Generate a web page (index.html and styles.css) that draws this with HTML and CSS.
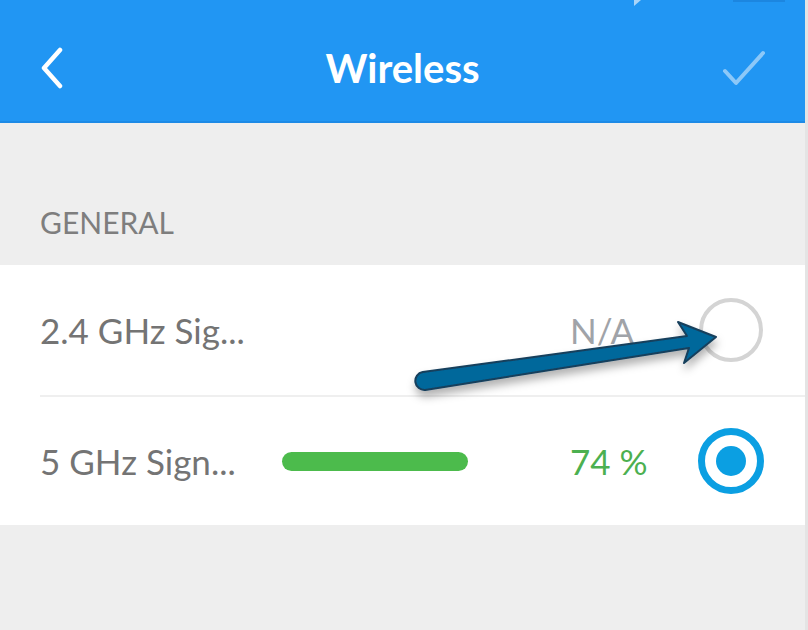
FILE: index.html
```html
<!DOCTYPE html>
<html>
<head>
<meta charset="utf-8">
<link rel="stylesheet" href="styles.css">
</head>
<body>
<div class="app">
  <header class="topbar">
    <button class="icon-btn back" aria-label="Back">
      <svg width="26" height="42" viewBox="0 0 26 42"><path d="M22 3 L6 21 L22 39" fill="none" stroke="#fff" stroke-width="4.5" stroke-linecap="round" stroke-linejoin="round"/></svg>
    </button>
    <h1 class="title">Wireless</h1>
    <button class="icon-btn check" aria-label="Save">
      <svg width="44" height="36" viewBox="0 0 44 36"><path d="M3 21 L14 33 L41 3" fill="none" stroke="#8cc8f8" stroke-width="4" stroke-linecap="round" stroke-linejoin="round"/></svg>
    </button>
  </header>

  <div class="section-head">GENERAL</div>

  <ul class="list">
    <li class="row">
      <span class="label">2.4 GHz Sig...</span>
      <span class="bar-slot"></span>
      <span class="value na">N/A</span>
      <span class="radio"></span>
    </li>
    <li class="row">
      <span class="label">5 GHz Sign...</span>
      <span class="bar-slot"><span class="bar"></span></span>
      <span class="value ok">74 %</span>
      <span class="radio on"><span class="dot"></span></span>
    </li>
  </ul>

  <div class="filler"></div>
</div>

<svg class="overlay" width="808" height="630" viewBox="0 0 808 630">
  <defs>
    <filter id="sh" x="-10%" y="-40%" width="120%" height="200%">
      <feDropShadow dx="1" dy="6" stdDeviation="4.5" flood-color="#000" flood-opacity="0.3"/>
    </filter>
  </defs>
  <path d="M634 0 L641 0 L634 6 Z" fill="#a9d4f8"/>
  <rect x="733" y="0" width="52" height="2" fill="#1c86e0"/>
  <path filter="url(#sh)" d="M422.7 372.1 L687 336 L678 322 L716 337 L684 363 L689 348 L425.3 389.9 A9 9 0 0 1 422.7 372.1 Z" fill="#00679b" stroke="#173f5c" stroke-width="2" stroke-linejoin="round"/>
</svg>
</body>
</html>
```

FILE: styles.css
```css
* { box-sizing: border-box; }
html, body { margin: 0; padding: 0; }
body {
  width: 808px;
  height: 630px;
  overflow: hidden;
  background: #e4e4e4;
  font-family: Lato, "Open Sans", "Liberation Sans", sans-serif;
  position: relative;
}
.app {
  width: 805px;
  height: 630px;
  display: flex;
  flex-direction: column;
  background: #eeeeee;
}
.topbar {
  height: 123px;
  flex: none;
  background: #2196f3;
  border-bottom: 2px solid #1d8ae6;
  display: grid;
  grid-template-columns: 1fr auto 1fr;
  align-items: center;
  padding: 14px 40px 0 40px;
}
.icon-btn {
  background: none;
  border: 0;
  padding: 0;
  display: flex;
  align-items: center;
}
.back { justify-self: start; margin-left: -2px; }
.check { justify-self: end; margin-right: -1px; }
.title {
  margin: 0;
  color: #fff;
  font-weight: 700;
  font-size: 40px;
  line-height: 1;
}
.section-head {
  height: 142px;
  flex: none;
  display: flex;
  align-items: flex-end;
  padding: 0 40px 28px;
  color: #7e7e7e;
  font-size: 30px;
  font-weight: 400;
  line-height: 1;
}
.list {
  list-style: none;
  margin: 0;
  padding: 0;
  background: #fff;
  flex: none;
}
.row {
  height: 130px;
  display: flex;
  align-items: center;
  padding: 0 40px;
}
.row + .row { border-top: 2px solid #efefef; margin-left: 40px; padding-left: 0; }
.label {
  width: 242px;
  color: #747474;
  font-size: 35px;
  font-weight: 400;
  flex: none;
}
.bar-slot {
  width: 288px;
  flex: none;
  display: flex;
  align-items: center;
}
.bar {
  display: block;
  width: 186px;
  height: 19px;
  border-radius: 10px;
  background: #4cbb4c;
}
.value {
  font-size: 35px;
  font-weight: 400;
  flex: 1;
}
.na { color: #a0a3a8; }
.ok { color: #4cb050; }
.radio {
  width: 64px;
  height: 64px;
  border-radius: 50%;
  border: 4px solid #d4d4d4;
  flex: none;
  margin-right: 2px;
  display: flex;
  align-items: center;
  justify-content: center;
}
.radio.on {
  width: 66px;
  height: 66px;
  border: 7px solid #0b9fe2;
  margin-right: 1px;
}
.dot {
  width: 30px;
  height: 30px;
  border-radius: 50%;
  background: #0b9fe2;
}
.filler { flex: 1; }
.overlay {
  position: absolute;
  top: 0;
  left: 0;
  pointer-events: none;
}
```
